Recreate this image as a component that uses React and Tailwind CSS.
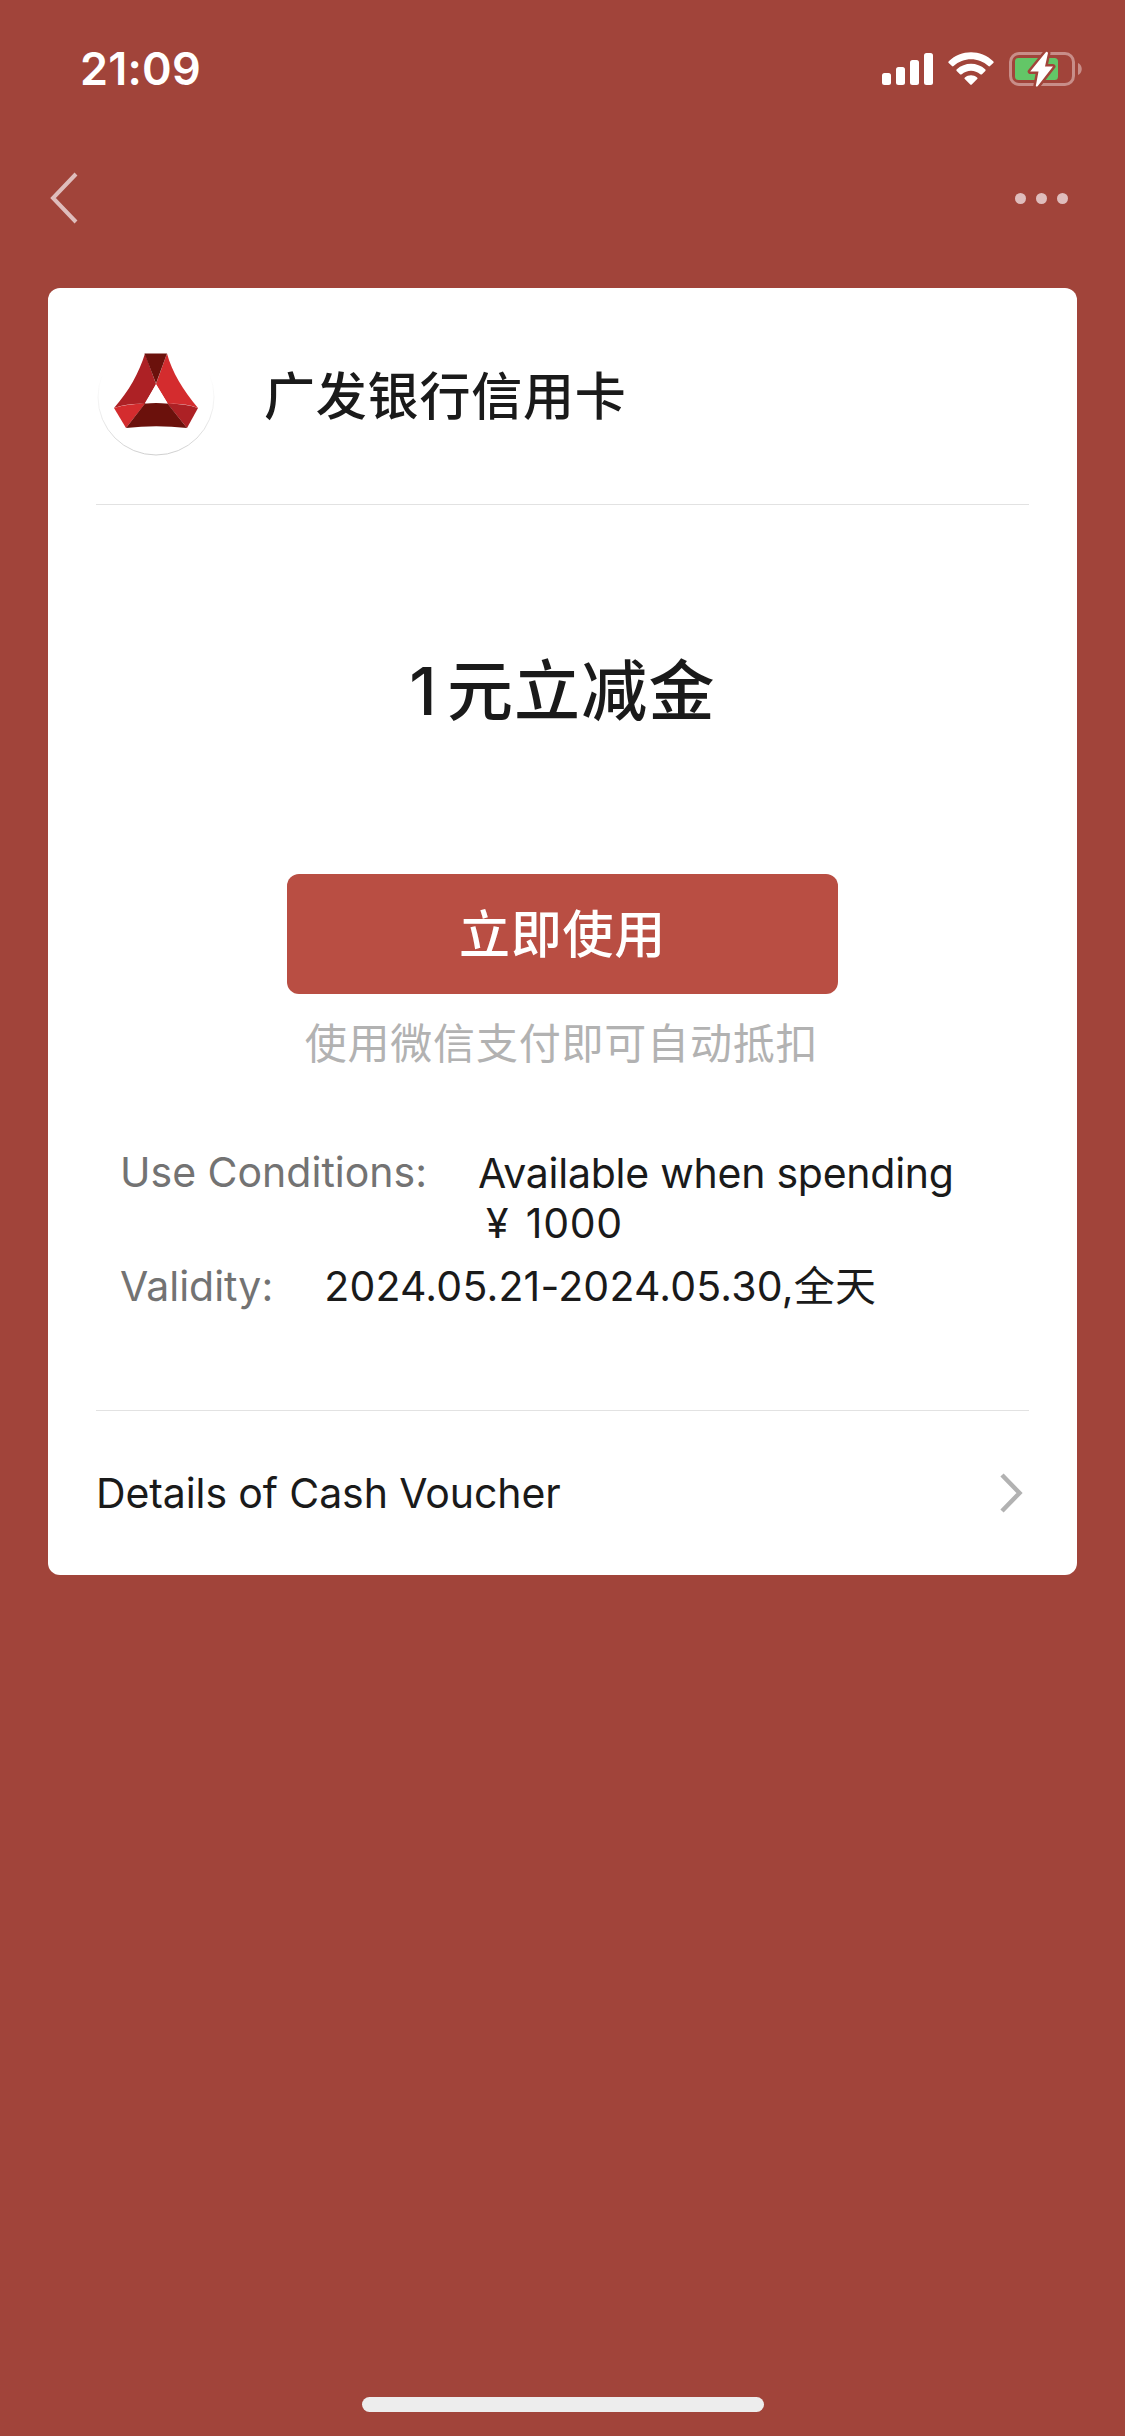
function StatusBar() {
  return (
    <div className="flex h-[132px] items-center justify-between pt-1.5 pl-20 pr-[43px]">
      <span className="text-[45px] leading-[60px] font-semibold tracking-[0.2px] text-white">21:09</span>

      <div className="flex items-center">
        {/* Signal */}
        <svg width="52" height="34" viewBox="0 0 52 34" fill="#fff">
          <rect x="0" y="21" width="9" height="12" rx="2.5" />
          <rect x="14" y="15" width="9" height="18" rx="2.5" />
          <rect x="28" y="8" width="9" height="25" rx="2.5" />
          <rect x="42" y="1" width="9" height="32" rx="2.5" />
        </svg>
        {/* Wifi */}
        <svg className="ml-3.5" width="46" height="34" viewBox="0 0 46 34" fill="#fff">
          <path d="M0.8 9.2C13-2.9 33-2.9 45.2 9.2c.6.6.6 1.2.1 1.7l-3.3 3.2c-.5.5-1 .5-1.6 0-9.7-9-25.1-9-34.8 0-.6.5-1.1.5-1.6 0L.7 10.9c-.5-.5-.5-1.1.1-1.7z" />
          <path d="M8.8 17.3c8-7.4 20.4-7.4 28.4 0 .6.6.6 1.2.1 1.7l-3.3 3.2c-.5.5-1 .5-1.7 0-5.3-4.7-13.3-4.7-18.6 0-.7.5-1.2.5-1.7 0L8.7 19c-.5-.5-.5-1.1.1-1.7z" />
          <path d="M16.9 25.4c3.5-2.9 8.7-2.9 12.2 0 .6.5.6 1.1.1 1.6l-5.2 5.3c-.7.7-1.3.7-2 0L16.8 27c-.5-.5-.5-1.1.1-1.6z" />
        </svg>
        {/* Battery */}
        <svg className="ml-3.5" width="74" height="38" viewBox="0 0 74 38">
          <rect x="2.5" y="3.5" width="63" height="31" rx="8.5" fill="none" stroke="#c88e89" strokeWidth="3" />
          <path d="M70 13c5 2 5 10 0 12z" fill="#c88e89" />
          <rect x="7" y="8" width="43" height="22" rx="3.5" fill="#63c667" />
          <path
            d="M37.6 2.5L22.2 21.5H30.5L27.8 36Q28.5 37.2 29.8 36L45 16.5H37L40 3Q39 1 37.6 2.5z"
            fill="#fff"
            stroke="#a1443a"
            strokeWidth="5"
            strokeLinejoin="round"
            paintOrder="stroke"
          />
        </svg>
      </div>
    </div>
  )
}

function NavBar() {
  return (
    <div className="flex h-[132px] items-center justify-between pl-[49px] pr-[57px]">
      <svg width="30" height="52" viewBox="0 0 30 52" fill="none" stroke="#dfbdbc" strokeWidth="4">
        <path d="M27 2L4 26L27 50" />
      </svg>
      <div className="flex gap-2.5">
        <span className="size-[11px] rounded-full bg-[#dfbdbc]" />
        <span className="size-[11px] rounded-full bg-[#dfbdbc]" />
        <span className="size-[11px] rounded-full bg-[#dfbdbc]" />
      </div>
    </div>
  )
}

function BankLogo() {
  return (
    <svg width="120" height="120" viewBox="0 0 120 120">
      <defs>
        <linearGradient id="ring" x1="0" y1="0" x2="0" y2="1">
          <stop offset="0.3" stopColor="#fff" />
          <stop offset="0.6" stopColor="#f0f0f0" />
          <stop offset="1" stopColor="#cfcfcf" />
        </linearGradient>
      </defs>
      <circle cx="60" cy="61" r="58" fill="#fff" stroke="url(#ring)" strokeWidth="1" />
      <path d="M49 17.5C43 37 33 55 18 72Q34 67 49 68L60 48z" fill="#ad2125" />
      <path d="M71 17.5C76 36 87 54 102 72Q88 67 72 68L60 48z" fill="#d42c2e" />
      <path d="M48.5 17.5H71L60 47.5z" fill="#6b110c" />
      <path d="M18 72Q34 67.5 49 67.8L30 92z" fill="#d42c2e" />
      <path d="M102 72Q88 67.5 71.5 67.8L91 92z" fill="#ad2125" />
      <path d="M49 67.5Q60 66.5 71.5 67.5L91 92Q60 88.5 30 92z" fill="#6b110c" />
      <path d="M60 48.5L71.5 67.2Q60 66.2 48.8 67.2z" fill="#fff" />
    </svg>
  )
}

export default function App() {
  return (
    <div className="flex h-[2436px] w-[1125px] flex-col bg-[#a1443a] font-['Inter','Noto_Sans_CJK_SC',sans-serif] text-[#1a1a1a]">
      <StatusBar />
      <NavBar />

      <main className="mx-12 mt-6 h-[1287px] rounded-xl bg-white px-12">
        <header className="flex h-[217px] items-center border-b border-[#e2e2e2]">
          <BankLogo />
          <h1 className="ml-12 pt-0.5 text-[51px] leading-[72px] font-medium tracking-[0.8px]">广发银行信用卡</h1>
        </header>

        <section className="flex h-[906px] flex-col items-center border-b border-[#e2e2e2]">
          <h2 className="mt-[138px] text-[66px] leading-[96px] font-medium tracking-[1.2px]">
            <span className="mr-[9px]">1</span>元立减金
          </h2>
          <button className="mt-[135px] h-[120px] w-[551px] rounded-xl bg-[#b94e43] pt-0.5 text-[51px] leading-[72px] font-medium tracking-[0.8px] text-white">
            立即使用
          </button>
          <p className="mt-5 pr-0.5 text-[42px] leading-[60px] tracking-[0.8px] text-[#b2b2b2]">使用微信支付即可自动抵扣</p>

          <dl className="mt-[73px] flex w-full flex-col gap-[13px] pl-6 text-[41px] leading-[50px]">
            <div className="flex">
              <dt className="text-[#737373]">Use Conditions:</dt>
              <dd className="ml-[51px] pt-px">
                <span className="tracking-[-0.25px]">Available when spending</span>
                <br />
                <span className="ml-2 mr-[5px]">¥</span>
                <span className="tracking-[0.7px]"> 1000</span>
              </dd>
            </div>
            <div className="flex">
              <dt className="text-[#737373]">Validity:</dt>
              <dd className="ml-[51px] tracking-[0.2px]">2024.05.21-2024.05.30,全天</dd>
            </div>
          </dl>
        </section>

        <a className="flex h-[164px] items-center justify-between pr-1.5">
          <span className="text-[41px] leading-[50px] tracking-[-0.1px]">Details of Cash Voucher</span>
          <svg width="24" height="42" viewBox="0 0 24 42" fill="none" stroke="#b2b2b2" strokeWidth="4.5">
            <path d="M3 3L20.5 21L3 39" />
          </svg>
        </a>
      </main>

      <div className="mx-auto mt-auto mb-6 h-[15px] w-[402px] rounded-full bg-[#ededed]" />
    </div>
  )
}
